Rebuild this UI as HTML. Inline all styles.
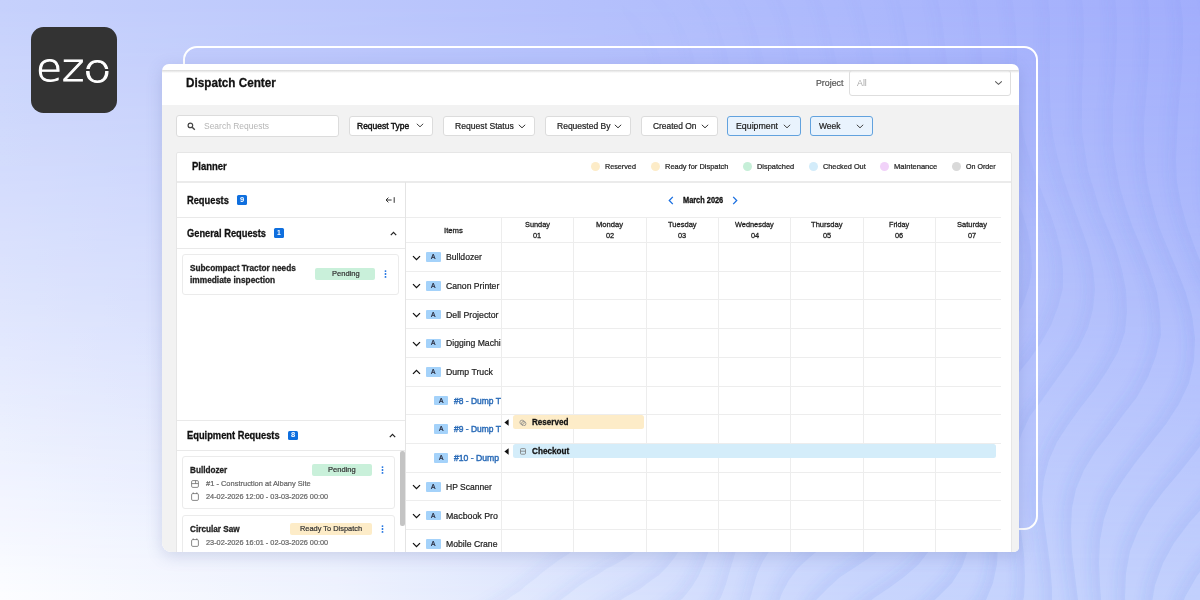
<!DOCTYPE html>
<html lang="en"><head><meta charset="utf-8"><title>Dispatch Center</title>
<style>
html,body{margin:0;padding:0;}
body{width:1200px;height:600px;overflow:hidden;position:relative;font-family:"Liberation Sans",sans-serif;background:#c9d3fc;}
#bg{position:absolute;left:0;top:0;width:1200px;height:600px;background:linear-gradient(to right,#c6d1fc 0%,#b4c0fc 50%,#a2aefc 100%);}
#bg2{position:absolute;left:0;top:0;width:1200px;height:600px;background:linear-gradient(to right,#fcfdff 0%,#eff3fe 28%,#d9e2fd 52%,#c8d5fd 72%,#c2d0fd 100%);
  -webkit-mask-image:linear-gradient(to bottom,rgba(0,0,0,0) 0%,rgba(0,0,0,.45) 50%,rgba(0,0,0,1) 100%);mask-image:linear-gradient(to bottom,rgba(0,0,0,0) 0%,rgba(0,0,0,.45) 50%,rgba(0,0,0,1) 100%);}
#bg svg{position:absolute;left:0;top:0;}
.abs,.t,#cv div,#cv svg{position:absolute;}
.t{white-space:nowrap;line-height:14px;height:14px;transform-origin:0 50%;display:block;}
#logo{position:absolute;left:31px;top:27px;width:86px;height:86px;border-radius:12.5px;background:#333;}
#frame{position:absolute;left:183px;top:46px;width:851px;height:479.5px;border:2px solid #fff;border-radius:14px;background:rgba(140,150,250,.07);}
#shadow{position:absolute;left:162px;top:64px;width:857px;height:487.5px;border-radius:7px 7px 5px 9px;box-shadow:0 4px 16px rgba(80,95,160,.22);}
#card{position:absolute;left:162px;top:64px;width:857px;height:487.5px;overflow:hidden;border-radius:7px 7px 5px 9px;background:#fff;}
#cv{position:absolute;left:-162px;top:-64px;width:1200px;height:600px;}
.btn{background:#fff;border:1px solid #dcdcdc;border-radius:3px;box-sizing:border-box;}
.btn.sel{background:#e9f3fd;border-color:#62a2de;}
.hl{height:1px;background:#e9e9e9;}
.vl{width:1px;background:#e9e9e9;}
.dot{width:9px;height:9px;border-radius:50%;}
.badge{background:#0f6fde;border-radius:1.5px;}
.ab{background:#a4d2fa;border-radius:1px;width:14.5px;height:9.5px;}
.rq{background:#fff;border:1px solid #ebebeb;border-radius:3px;box-sizing:border-box;}
.pill{border-radius:2px;}
#lg{position:absolute;left:0;top:0;font:200 40px/40px "DejaVu Sans","Liberation Sans",sans-serif;color:#fff;-webkit-text-stroke:1px #fff;}
#lg span{position:absolute;display:block;transform-origin:0 0;white-space:nowrap;}

</style></head>
<body>
<div id="bg"><div id="bg2"></div>
<svg width="1200" height="600" viewBox="0 0 1200 600" fill="none">
<defs><filter id="wb" x="-20%" y="-20%" width="140%" height="140%"><feGaussianBlur stdDeviation="6"/></filter>
<linearGradient id="wm" gradientUnits="userSpaceOnUse" x1="600" y1="0" x2="1000" y2="560"><stop offset="0" stop-color="#fff" stop-opacity="0"/><stop offset=".5" stop-color="#fff" stop-opacity=".45"/><stop offset="1" stop-color="#fff" stop-opacity="1"/></linearGradient>
<mask id="wmask" maskUnits="userSpaceOnUse" x="0" y="0" width="1200" height="600"><rect width="1200" height="600" fill="url(#wm)"/></mask>
<clipPath id="wc0"><path d="M330 260 L526 -82 535 -76 542 -69 550 -62 556 -54 563 -46 570 -39 577 -32 584 -25 591 -18 599 -12 608 -7 616 -1 624 6 632 12 639 19 645 27 651 36 655 45 659 55 662 65 664 75 666 85 669 95 671 104 675 113 679 122 683 131 688 140 693 148 699 157 704 166 708 175 712 185 714 194 716 204 716 215 715 225 713 235 710 245 708 255 705 265 703 274 703 284 704 294 707 304 710 314 714 325 717 336 720 347 720 358 719 368 715 378 709 387 702 395 693 403 684 410 676 417 668 424 662 432 657 440 653 450 651 459 648 470 646 480 643 490 639 500 634 509 627 516 619 523 611 529 602 534 593 539 584 544 575 549 567 555 559 560 551 566 543 572 536 578 528 584 520 591 512 596 504 602 495 607 487 612 478 617 468 620 459 624 449 627 440 629 430 632 420 634 411 636 401 638 391 641 381 643 372 645 362 647 352 648 342 650 332 651 321 651 311 651 301 650 291 648 281 646 271 644 262 641 252 638 243 635Z"/></clipPath>
<clipPath id="wc1"><path d="M330 260 L544 -113 553 -106 562 -99 570 -91 577 -83 584 -74 591 -65 598 -57 605 -49 613 -41 621 -34 629 -27 638 -21 647 -14 655 -7 664 0 671 9 677 17 683 27 687 37 691 48 694 58 696 69 699 80 701 91 704 101 708 111 712 120 717 130 723 139 729 148 735 158 740 168 745 178 748 189 751 199 752 210 752 221 750 232 747 243 744 254 741 265 738 276 736 286 736 297 737 307 740 319 743 330 747 342 750 354 752 366 752 377 749 388 744 399 737 408 728 417 718 425 708 432 699 439 691 447 684 455 679 464 675 474 672 485 669 496 666 507 663 518 658 528 651 537 644 545 635 552 626 558 616 564 606 569 597 575 588 580 579 586 570 593 562 599 553 606 545 612 537 619 528 626 519 632 510 638 501 643 491 648 481 653 471 657 460 660 450 663 439 666 429 668 418 670 407 672 397 674 386 676 375 678 364 680 354 681 343 682 332 683 321 684 310 683 299 682 288 681 277 679 266 676 256 673 246 669 235 666Z"/></clipPath>
<clipPath id="wc2"><path d="M330 260 L561 -142 571 -136 580 -128 589 -120 597 -111 605 -101 612 -91 619 -82 626 -72 634 -64 642 -55 651 -48 660 -40 669 -33 678 -26 687 -18 696 -10 703 -1 710 9 716 19 720 30 724 42 727 53 729 65 732 77 735 88 738 99 742 109 747 120 753 130 759 140 765 150 772 161 777 172 782 183 786 194 788 206 789 218 788 230 785 242 782 254 777 265 773 277 770 288 768 300 768 311 769 323 772 335 776 347 779 360 782 373 783 386 781 398 777 410 771 420 762 430 752 439 741 447 730 455 720 462 711 471 704 480 699 490 695 500 692 512 689 524 685 536 681 547 675 557 667 567 659 575 649 582 640 589 629 595 619 601 609 607 600 613 590 620 581 627 572 634 562 641 553 648 544 655 534 662 525 668 514 675 504 680 493 685 482 690 471 694 460 697 448 700 437 702 425 704 414 705 402 707 390 709 379 710 367 712 355 713 344 714 332 715 320 716 308 715 296 715 285 713 273 711 262 708 250 705 239 701 228 697Z"/></clipPath>
<clipPath id="wc3"><path d="M330 260 L577 -170 588 -164 599 -157 608 -148 617 -139 625 -128 633 -118 640 -107 648 -97 655 -87 663 -77 672 -68 681 -60 691 -52 701 -44 711 -36 720 -28 729 -19 737 -9 744 2 750 13 754 25 758 37 761 50 764 62 766 74 770 86 773 98 778 109 784 120 790 131 796 142 803 154 810 165 815 177 820 189 824 202 825 215 825 228 823 240 820 253 815 266 810 278 805 290 801 302 799 315 798 327 800 340 803 353 806 366 810 380 812 394 811 407 809 420 803 432 796 443 786 453 774 462 762 470 751 478 740 487 731 495 724 505 719 516 715 528 711 540 708 553 703 566 698 577 691 588 683 598 673 606 663 614 653 621 642 628 631 634 621 641 610 648 600 655 590 662 580 670 570 677 560 685 550 692 539 699 528 706 517 712 506 718 494 723 482 727 470 730 457 733 445 735 432 737 420 739 407 740 395 741 382 743 370 744 357 745 345 746 332 747 319 747 307 747 294 746 282 745 269 742 257 740 245 736 233 732 221 728Z"/></clipPath>
<clipPath id="wc4"><path d="M330 260 L592 -197 605 -191 616 -184 627 -176 637 -166 646 -155 654 -144 662 -132 670 -121 677 -110 685 -99 694 -89 703 -80 713 -71 723 -63 734 -54 744 -46 755 -36 764 -27 772 -16 779 -4 785 8 790 21 793 34 796 47 799 60 802 73 806 86 810 99 815 111 821 123 827 135 834 147 841 159 848 172 854 184 858 198 861 211 862 225 861 239 858 253 853 266 846 280 840 293 834 306 830 318 828 331 828 344 830 358 832 372 836 387 838 401 840 416 839 430 835 444 828 456 819 467 808 477 795 486 782 495 770 503 760 512 751 522 744 532 738 544 734 557 730 570 726 584 721 597 714 609 706 620 697 630 687 639 676 647 665 655 654 662 642 669 631 677 620 684 609 691 598 699 587 707 576 714 565 722 554 730 542 737 530 743 518 749 505 755 493 759 480 763 466 766 453 769 439 770 426 772 412 773 399 773 386 774 372 775 359 776 345 777 332 777 319 778 305 777 292 777 278 776 265 774 252 771 239 768 226 764 213 760Z"/></clipPath>
<clipPath id="wc5"><path d="M330 260 L607 -223 621 -217 633 -211 645 -202 656 -193 666 -182 675 -170 684 -158 692 -146 700 -134 708 -122 716 -111 725 -100 735 -91 746 -82 757 -73 769 -64 780 -54 791 -44 800 -33 809 -22 816 -9 822 4 827 18 830 32 833 46 836 60 839 74 843 87 847 101 853 114 859 127 866 140 873 153 880 166 886 180 892 194 896 208 898 223 898 238 895 252 890 267 884 281 876 295 869 309 863 322 858 335 856 349 856 363 858 378 861 393 864 408 866 424 866 440 864 454 859 468 851 481 841 492 828 502 815 512 802 521 790 530 779 539 770 550 763 561 757 574 753 588 749 603 744 617 738 630 730 643 721 655 711 665 700 674 689 683 677 691 664 698 652 706 640 713 628 721 616 729 604 736 592 744 580 752 568 760 556 767 543 774 530 781 517 786 503 791 489 795 475 799 461 801 446 803 432 804 418 805 403 805 389 806 375 806 361 807 346 807 332 807 318 808 304 808 290 807 275 806 261 805 247 803 233 800 220 796 206 792Z"/></clipPath>
<clipPath id="wc6"><path d="M330 260 L621 -248 636 -243 650 -236 663 -228 675 -219 686 -209 697 -197 706 -184 715 -171 723 -158 731 -146 740 -133 749 -122 759 -111 770 -101 781 -91 793 -82 805 -72 817 -62 828 -51 838 -39 847 -26 854 -13 860 1 864 16 868 31 871 46 874 61 877 76 880 91 885 105 890 119 896 133 903 147 910 161 917 175 924 190 929 205 932 221 933 236 931 252 927 267 921 283 913 297 904 312 896 326 889 340 885 354 882 368 883 383 885 399 888 415 891 432 892 448 892 465 889 480 883 494 874 507 862 519 849 529 835 539 821 548 809 558 798 568 789 580 782 593 777 607 772 622 767 637 761 652 754 666 745 678 735 690 724 701 712 710 699 719 687 727 674 735 660 743 647 751 634 758 621 766 608 774 595 782 582 789 569 797 555 804 542 811 527 817 513 822 498 827 484 830 468 833 453 835 438 836 423 837 407 837 392 837 377 837 362 837 347 837 332 838 317 838 302 838 287 838 272 837 257 836 242 834 228 832 213 828 198 824Z"/></clipPath>
<clipPath id="wc7"><path d="M330 260 L635 -272 651 -267 666 -261 680 -254 694 -245 706 -235 718 -223 728 -211 738 -197 747 -184 755 -170 764 -157 773 -144 783 -132 794 -121 806 -110 818 -100 831 -90 844 -79 856 -68 868 -56 878 -43 886 -30 894 -15 899 0 903 16 906 32 909 48 911 64 914 80 917 96 922 111 927 126 933 141 940 156 947 171 954 187 960 202 964 218 967 235 966 251 964 268 958 284 950 300 940 315 930 330 922 344 915 359 910 374 908 389 909 405 911 422 914 439 917 457 919 474 917 491 913 507 906 522 896 535 883 547 869 558 854 568 840 577 828 588 817 599 808 612 801 626 796 641 790 657 784 673 777 688 768 702 759 715 748 727 735 738 722 747 709 756 695 765 681 773 667 781 652 788 638 796 624 803 610 811 596 819 582 826 567 833 553 840 538 846 523 852 507 857 492 861 476 864 460 866 444 867 428 868 412 868 396 868 380 868 364 868 348 868 332 868 317 868 301 868 285 868 269 868 253 867 237 866 222 864 206 861 191 857Z"/></clipPath>
<clipPath id="wc8"><path d="M330 260 L649 -296 665 -291 681 -285 697 -278 712 -270 726 -261 739 -250 751 -238 762 -224 771 -210 781 -196 790 -181 799 -168 809 -154 820 -142 831 -130 844 -119 857 -108 870 -97 884 -85 896 -73 908 -60 918 -46 927 -31 933 -15 938 1 942 18 944 36 946 53 948 70 950 86 954 103 958 119 963 135 969 151 976 167 982 183 989 200 994 216 998 234 1000 251 998 268 994 285 986 302 977 318 966 334 956 349 946 364 939 379 935 395 934 411 935 428 938 446 941 465 944 483 945 502 943 520 938 536 929 551 918 565 904 577 889 588 874 598 860 609 847 620 836 632 827 646 820 661 814 677 807 694 800 710 792 725 782 740 771 753 758 765 745 775 731 785 716 794 701 802 686 810 670 818 655 825 640 832 625 840 610 847 594 855 579 862 564 869 548 875 532 881 516 886 500 891 483 894 467 897 450 899 433 900 416 900 399 900 382 900 366 899 349 899 333 899 316 899 299 899 283 900 266 900 249 899 233 898 216 897 199 894 183 891Z"/></clipPath>
<clipPath id="wc9"><path d="M330 260 L663 -321 680 -315 697 -309 714 -303 730 -295 746 -287 760 -276 774 -265 786 -251 797 -237 807 -222 817 -207 826 -192 836 -178 846 -164 858 -151 870 -138 883 -126 897 -114 911 -102 925 -90 937 -77 949 -62 959 -47 967 -31 972 -13 977 4 979 23 981 41 982 59 984 77 986 95 988 112 992 129 997 146 1003 163 1010 180 1016 197 1023 215 1028 232 1031 250 1032 269 1029 287 1023 304 1014 322 1003 338 991 354 980 370 971 386 964 402 961 418 960 435 962 454 965 473 968 492 971 512 971 532 968 550 962 567 952 583 939 596 925 609 909 620 893 631 879 642 866 654 855 667 846 682 838 698 830 715 823 732 814 748 804 764 793 778 780 791 766 802 752 813 736 822 721 831 704 839 688 847 672 854 656 861 639 868 623 875 607 883 591 890 574 897 558 903 542 910 525 915 508 920 491 924 473 927 456 930 438 931 420 932 403 932 385 932 368 932 350 931 333 931 315 931 298 931 280 932 263 932 245 932 228 931 210 930 192 928 175 925Z"/></clipPath>
<clipPath id="wc10"><path d="M330 260 L677 -346 695 -339 713 -334 731 -327 748 -320 765 -312 782 -303 797 -292 810 -279 823 -265 834 -249 844 -234 854 -218 864 -202 874 -187 885 -172 897 -158 910 -145 924 -132 938 -119 952 -106 966 -92 978 -78 989 -62 999 -45 1006 -27 1011 -9 1014 10 1016 29 1017 49 1017 68 1018 87 1019 105 1022 123 1025 141 1030 159 1036 177 1043 195 1050 213 1056 231 1061 250 1063 269 1063 288 1058 307 1051 325 1041 343 1029 360 1016 376 1005 392 996 409 990 425 987 443 987 461 990 481 993 501 996 522 998 543 997 564 993 583 986 600 974 616 960 630 944 642 928 654 912 665 897 677 884 690 872 704 863 720 854 736 845 753 836 770 826 787 814 802 801 816 787 828 772 840 756 850 740 859 723 867 706 875 688 883 671 890 654 896 636 903 619 910 602 917 585 924 568 931 551 938 533 944 516 949 498 954 480 958 461 961 443 963 425 964 406 965 388 965 369 965 351 964 333 964 315 964 296 964 278 965 260 965 241 965 222 965 204 964 185 962 167 960Z"/></clipPath>
<clipPath id="wc11"><path d="M330 260 L692 -372 710 -365 729 -358 748 -352 766 -346 785 -338 803 -329 819 -318 835 -306 849 -292 861 -277 872 -261 883 -244 893 -227 903 -210 914 -194 925 -179 937 -164 950 -150 964 -136 979 -122 993 -107 1006 -92 1019 -76 1029 -59 1037 -41 1044 -22 1048 -2 1050 18 1050 38 1050 58 1050 79 1050 98 1051 118 1053 136 1057 155 1062 174 1068 192 1075 211 1082 230 1089 250 1093 269 1095 289 1093 309 1088 328 1079 347 1067 365 1054 383 1042 400 1030 416 1022 433 1016 451 1014 470 1015 489 1018 510 1021 532 1024 554 1025 576 1024 597 1018 617 1009 635 996 651 980 664 963 677 946 689 929 700 913 713 900 726 888 741 878 758 868 775 858 792 847 809 835 825 822 840 807 853 792 865 775 876 758 886 741 895 723 903 704 911 686 918 668 924 650 931 631 938 614 945 596 952 578 959 560 965 542 972 523 978 505 984 486 989 467 992 448 995 429 997 410 999 391 999 371 999 352 999 333 999 314 998 295 998 275 998 256 999 237 999 217 999 198 998 178 997 159 994Z"/></clipPath>
<clipPath id="wc12"><path d="M330 260 L708 -400 726 -391 745 -384 765 -378 785 -371 804 -364 824 -355 842 -345 859 -333 874 -320 888 -305 901 -288 912 -271 922 -253 932 -234 943 -217 953 -200 965 -183 977 -167 991 -152 1005 -137 1019 -122 1033 -106 1046 -90 1058 -72 1067 -54 1075 -34 1080 -14 1083 7 1084 28 1084 49 1083 70 1082 91 1082 112 1082 132 1085 151 1088 171 1094 190 1100 210 1108 229 1116 249 1122 270 1126 290 1127 311 1125 332 1118 352 1107 371 1095 389 1081 407 1068 425 1057 442 1049 460 1044 479 1042 499 1044 520 1047 542 1050 565 1052 588 1052 611 1049 633 1041 653 1030 671 1016 686 998 700 980 713 961 724 944 736 928 749 914 764 901 779 890 796 878 813 867 830 854 847 841 862 826 877 811 890 794 902 776 912 758 922 739 930 720 938 701 946 682 952 663 959 644 966 625 973 606 980 588 987 569 994 550 1001 531 1008 512 1014 493 1020 473 1024 454 1028 434 1031 414 1033 393 1034 373 1035 353 1034 333 1034 313 1034 293 1033 273 1033 253 1033 232 1033 212 1033 192 1032 171 1031 151 1028Z"/></clipPath>
<clipPath id="wc13"><path d="M330 260 L725 -429 744 -419 763 -411 783 -404 803 -396 824 -389 844 -381 864 -371 883 -360 900 -347 915 -332 929 -315 941 -297 952 -278 962 -259 972 -240 982 -221 992 -202 1004 -185 1016 -168 1030 -152 1044 -136 1058 -119 1072 -102 1084 -84 1095 -66 1104 -46 1111 -25 1115 -4 1117 18 1117 40 1116 62 1115 84 1113 105 1113 126 1113 147 1116 167 1120 188 1126 208 1133 228 1142 249 1150 270 1157 292 1160 313 1161 335 1156 356 1148 377 1137 397 1123 415 1109 434 1095 452 1084 470 1076 489 1072 508 1071 530 1072 552 1075 576 1078 600 1079 624 1077 648 1072 670 1063 690 1049 707 1033 723 1014 736 994 749 975 760 957 773 940 786 925 801 912 817 899 834 886 851 873 868 859 884 844 899 828 913 811 926 794 938 775 948 756 957 736 966 716 973 696 981 676 988 657 994 637 1001 617 1008 598 1015 578 1023 559 1030 539 1038 520 1045 500 1051 479 1057 459 1062 438 1066 417 1068 396 1070 375 1071 354 1071 333 1071 312 1070 291 1069 270 1069 249 1068 228 1067 207 1067 186 1066 164 1064 143 1062Z"/></clipPath>
<clipPath id="wc14"><path d="M330 260 L743 -460 761 -449 781 -439 801 -430 822 -422 843 -414 864 -406 885 -396 905 -385 924 -373 941 -358 956 -341 970 -323 981 -303 992 -283 1001 -262 1011 -242 1020 -222 1031 -203 1042 -184 1055 -166 1068 -149 1082 -132 1096 -114 1110 -96 1122 -77 1132 -57 1140 -36 1146 -14 1149 8 1150 31 1149 54 1148 76 1146 99 1144 121 1144 143 1145 164 1148 185 1153 206 1159 227 1168 249 1177 270 1186 293 1192 315 1195 338 1194 361 1189 383 1179 404 1166 424 1151 443 1136 462 1123 480 1111 499 1104 519 1100 540 1099 563 1100 586 1102 611 1104 636 1104 661 1100 685 1093 707 1081 727 1065 744 1047 759 1027 772 1006 784 986 797 967 809 950 823 934 838 920 855 906 871 892 888 877 905 862 921 846 936 829 950 810 962 792 974 772 984 752 993 732 1002 711 1009 690 1017 670 1024 649 1031 629 1038 609 1045 588 1053 568 1061 548 1069 527 1076 507 1084 486 1090 464 1096 443 1101 421 1104 399 1107 377 1108 355 1108 333 1108 311 1107 290 1106 268 1104 246 1103 224 1102 202 1100 180 1099 158 1097 135 1094Z"/></clipPath>
<clipPath id="wc15"><path d="M330 260 L762 -493 780 -480 799 -468 820 -458 840 -448 862 -439 884 -430 906 -421 927 -410 947 -397 966 -383 982 -366 997 -348 1010 -328 1021 -307 1030 -285 1039 -263 1048 -241 1058 -220 1068 -200 1079 -181 1092 -162 1105 -144 1119 -125 1133 -107 1147 -87 1158 -67 1168 -46 1176 -24 1180 -2 1183 21 1183 45 1182 69 1180 92 1178 115 1177 138 1176 160 1177 182 1181 204 1187 226 1195 248 1204 271 1214 294 1223 317 1229 341 1231 365 1229 388 1221 411 1210 433 1195 453 1179 473 1163 492 1149 511 1138 531 1130 551 1126 573 1125 597 1126 622 1127 648 1128 674 1125 699 1120 723 1110 745 1096 764 1078 781 1058 795 1036 808 1014 820 994 832 974 846 957 860 940 875 925 892 910 909 895 926 879 942 863 958 845 973 827 987 808 999 788 1011 768 1021 747 1030 726 1039 705 1047 683 1054 662 1062 641 1069 620 1077 599 1084 577 1092 556 1101 535 1109 514 1117 492 1124 470 1130 448 1136 425 1140 402 1143 379 1145 356 1146 334 1145 311 1144 288 1142 265 1140 242 1138 219 1136 197 1134 174 1131 151 1128 128 1125Z"/></clipPath>
<clipPath id="wc16"><path d="M330 260 L781 -526 800 -512 819 -498 839 -486 859 -475 881 -464 903 -454 925 -444 948 -433 969 -420 989 -406 1007 -390 1023 -372 1037 -351 1049 -330 1059 -307 1068 -284 1076 -261 1085 -238 1094 -217 1104 -196 1116 -175 1129 -156 1142 -137 1157 -117 1170 -98 1184 -77 1195 -56 1204 -34 1211 -11 1216 12 1218 36 1218 61 1216 85 1214 109 1212 133 1210 156 1210 179 1211 202 1216 225 1223 248 1232 271 1242 295 1253 319 1261 344 1266 369 1267 394 1263 418 1253 441 1240 463 1223 484 1206 504 1189 523 1174 543 1163 563 1155 585 1151 608 1149 632 1149 658 1149 685 1148 712 1144 737 1136 761 1124 783 1107 801 1088 817 1066 831 1043 844 1021 856 999 868 980 882 962 897 945 913 928 929 912 947 896 964 879 980 862 996 844 1011 825 1025 805 1038 784 1049 763 1060 741 1069 720 1078 697 1086 675 1094 653 1102 631 1109 609 1117 587 1125 565 1134 543 1142 521 1150 498 1158 476 1165 452 1171 429 1176 405 1180 381 1182 358 1183 334 1182 310 1181 286 1179 262 1176 239 1173 215 1170 192 1166 168 1163 145 1159 121 1155Z"/></clipPath>
<clipPath id="wc17"><path d="M330 260 L801 -561 820 -545 839 -529 858 -515 879 -501 900 -489 922 -477 944 -466 967 -454 989 -442 1010 -428 1030 -412 1047 -394 1062 -374 1076 -352 1087 -329 1096 -305 1104 -281 1112 -257 1121 -233 1130 -211 1140 -189 1152 -168 1165 -148 1180 -128 1194 -108 1208 -87 1221 -66 1233 -44 1242 -21 1249 3 1253 28 1254 52 1254 78 1252 103 1249 127 1246 152 1245 176 1245 200 1247 224 1252 247 1260 271 1270 296 1281 321 1291 347 1299 373 1303 399 1302 425 1295 449 1283 473 1268 495 1249 516 1230 536 1213 556 1197 576 1185 597 1177 619 1172 643 1170 669 1170 696 1168 723 1165 750 1159 776 1149 799 1134 820 1116 838 1094 853 1071 867 1048 879 1025 892 1004 905 984 919 965 934 948 951 931 968 914 985 897 1003 879 1019 860 1036 841 1051 821 1065 801 1078 779 1090 757 1100 735 1110 712 1119 689 1128 666 1136 643 1143 620 1151 597 1159 574 1168 551 1176 528 1184 505 1192 481 1199 457 1206 433 1211 408 1215 384 1218 359 1219 334 1219 309 1217 284 1214 260 1211 235 1207 211 1203 187 1198 163 1194 138 1189 114 1184Z"/></clipPath>
<clipPath id="wc18"><path d="M330 260 L821 -596 840 -578 859 -560 878 -544 898 -528 918 -514 940 -500 962 -487 985 -475 1008 -462 1030 -448 1051 -432 1070 -414 1087 -395 1101 -373 1113 -350 1124 -325 1133 -300 1140 -275 1148 -250 1157 -226 1166 -203 1177 -181 1189 -160 1203 -139 1218 -118 1233 -97 1248 -75 1261 -53 1272 -30 1281 -6 1288 19 1291 44 1292 70 1291 96 1289 122 1286 147 1283 173 1281 198 1281 222 1284 247 1289 272 1298 297 1309 323 1320 349 1330 376 1336 404 1338 431 1334 457 1325 482 1311 506 1293 528 1273 549 1252 569 1233 589 1217 609 1205 631 1196 654 1191 679 1189 706 1187 733 1184 761 1179 788 1171 814 1159 837 1142 857 1122 874 1099 889 1075 903 1051 915 1028 929 1007 942 987 957 968 974 950 991 932 1008 914 1026 896 1044 878 1061 858 1077 838 1093 817 1107 796 1120 773 1132 751 1143 727 1153 704 1162 680 1170 656 1179 632 1186 608 1194 584 1202 560 1210 535 1218 511 1226 486 1233 462 1240 436 1246 411 1250 385 1253 360 1254 334 1254 308 1252 283 1249 257 1245 232 1240 207 1235 182 1229 157 1224 132 1218 108 1213Z"/></clipPath>
<clipPath id="wc19"><path d="M330 260 L840 -630 860 -611 879 -591 898 -573 917 -555 937 -538 958 -523 980 -508 1003 -494 1025 -481 1048 -466 1070 -451 1091 -433 1109 -414 1126 -393 1140 -370 1151 -346 1161 -320 1169 -294 1177 -268 1185 -243 1193 -218 1203 -195 1215 -172 1228 -150 1243 -128 1258 -107 1274 -85 1289 -63 1302 -39 1314 -15 1323 10 1328 36 1331 62 1332 89 1330 116 1327 143 1323 169 1319 195 1317 221 1317 247 1320 272 1327 298 1336 325 1347 352 1357 380 1366 408 1371 436 1370 464 1364 491 1352 516 1335 540 1314 562 1292 582 1270 602 1251 622 1234 643 1222 665 1213 690 1208 715 1204 743 1202 771 1198 800 1191 827 1181 852 1166 875 1147 894 1126 911 1102 926 1078 940 1054 953 1031 967 1010 982 989 998 970 1015 951 1032 933 1050 914 1069 895 1087 876 1104 856 1121 834 1137 813 1151 790 1165 767 1177 743 1187 718 1197 693 1206 668 1214 643 1222 618 1230 593 1237 568 1245 543 1252 517 1259 492 1266 466 1273 440 1279 414 1283 387 1286 361 1287 334 1287 308 1286 281 1282 255 1278 229 1272 203 1266 177 1260 152 1254 127 1247 101 1241Z"/></clipPath>
</defs><g mask="url(#wmask)">
<g clip-path="url(#wc0)"><path d="M526 -82 535 -76 542 -69 550 -62 556 -54 563 -46 570 -39 577 -32 584 -25 591 -18 599 -12 608 -7 616 -1 624 6 632 12 639 19 645 27 651 36 655 45 659 55 662 65 664 75 666 85 669 95 671 104 675 113 679 122 683 131 688 140 693 148 699 157 704 166 708 175 712 185 714 194 716 204 716 215 715 225 713 235 710 245 708 255 705 265 703 274 703 284 704 294 707 304 710 314 714 325 717 336 720 347 720 358 719 368 715 378 709 387 702 395 693 403 684 410 676 417 668 424 662 432 657 440 653 450 651 459 648 470 646 480 643 490 639 500 634 509 627 516 619 523 611 529 602 534 593 539 584 544 575 549 567 555 559 560 551 566 543 572 536 578 528 584 520 591 512 596 504 602 495 607 487 612 478 617 468 620 459 624 449 627 440 629 430 632 420 634 411 636 401 638 391 641 381 643 372 645 362 647 352 648 342 650 332 651 321 651 311 651 301 650 291 648 281 646 271 644 262 641 252 638 243 635" stroke="#3f66d8" stroke-opacity=".10" stroke-width="16" fill="none" filter="url(#wb)"/></g>
<g clip-path="url(#wc1)"><path d="M544 -113 553 -106 562 -99 570 -91 577 -83 584 -74 591 -65 598 -57 605 -49 613 -41 621 -34 629 -27 638 -21 647 -14 655 -7 664 0 671 9 677 17 683 27 687 37 691 48 694 58 696 69 699 80 701 91 704 101 708 111 712 120 717 130 723 139 729 148 735 158 740 168 745 178 748 189 751 199 752 210 752 221 750 232 747 243 744 254 741 265 738 276 736 286 736 297 737 307 740 319 743 330 747 342 750 354 752 366 752 377 749 388 744 399 737 408 728 417 718 425 708 432 699 439 691 447 684 455 679 464 675 474 672 485 669 496 666 507 663 518 658 528 651 537 644 545 635 552 626 558 616 564 606 569 597 575 588 580 579 586 570 593 562 599 553 606 545 612 537 619 528 626 519 632 510 638 501 643 491 648 481 653 471 657 460 660 450 663 439 666 429 668 418 670 407 672 397 674 386 676 375 678 364 680 354 681 343 682 332 683 321 684 310 683 299 682 288 681 277 679 266 676 256 673 246 669 235 666" stroke="#3f66d8" stroke-opacity=".10" stroke-width="16" fill="none" filter="url(#wb)"/></g>
<g clip-path="url(#wc2)"><path d="M561 -142 571 -136 580 -128 589 -120 597 -111 605 -101 612 -91 619 -82 626 -72 634 -64 642 -55 651 -48 660 -40 669 -33 678 -26 687 -18 696 -10 703 -1 710 9 716 19 720 30 724 42 727 53 729 65 732 77 735 88 738 99 742 109 747 120 753 130 759 140 765 150 772 161 777 172 782 183 786 194 788 206 789 218 788 230 785 242 782 254 777 265 773 277 770 288 768 300 768 311 769 323 772 335 776 347 779 360 782 373 783 386 781 398 777 410 771 420 762 430 752 439 741 447 730 455 720 462 711 471 704 480 699 490 695 500 692 512 689 524 685 536 681 547 675 557 667 567 659 575 649 582 640 589 629 595 619 601 609 607 600 613 590 620 581 627 572 634 562 641 553 648 544 655 534 662 525 668 514 675 504 680 493 685 482 690 471 694 460 697 448 700 437 702 425 704 414 705 402 707 390 709 379 710 367 712 355 713 344 714 332 715 320 716 308 715 296 715 285 713 273 711 262 708 250 705 239 701 228 697" stroke="#3f66d8" stroke-opacity=".10" stroke-width="16" fill="none" filter="url(#wb)"/></g>
<g clip-path="url(#wc3)"><path d="M577 -170 588 -164 599 -157 608 -148 617 -139 625 -128 633 -118 640 -107 648 -97 655 -87 663 -77 672 -68 681 -60 691 -52 701 -44 711 -36 720 -28 729 -19 737 -9 744 2 750 13 754 25 758 37 761 50 764 62 766 74 770 86 773 98 778 109 784 120 790 131 796 142 803 154 810 165 815 177 820 189 824 202 825 215 825 228 823 240 820 253 815 266 810 278 805 290 801 302 799 315 798 327 800 340 803 353 806 366 810 380 812 394 811 407 809 420 803 432 796 443 786 453 774 462 762 470 751 478 740 487 731 495 724 505 719 516 715 528 711 540 708 553 703 566 698 577 691 588 683 598 673 606 663 614 653 621 642 628 631 634 621 641 610 648 600 655 590 662 580 670 570 677 560 685 550 692 539 699 528 706 517 712 506 718 494 723 482 727 470 730 457 733 445 735 432 737 420 739 407 740 395 741 382 743 370 744 357 745 345 746 332 747 319 747 307 747 294 746 282 745 269 742 257 740 245 736 233 732 221 728" stroke="#3f66d8" stroke-opacity=".10" stroke-width="16" fill="none" filter="url(#wb)"/></g>
<g clip-path="url(#wc4)"><path d="M592 -197 605 -191 616 -184 627 -176 637 -166 646 -155 654 -144 662 -132 670 -121 677 -110 685 -99 694 -89 703 -80 713 -71 723 -63 734 -54 744 -46 755 -36 764 -27 772 -16 779 -4 785 8 790 21 793 34 796 47 799 60 802 73 806 86 810 99 815 111 821 123 827 135 834 147 841 159 848 172 854 184 858 198 861 211 862 225 861 239 858 253 853 266 846 280 840 293 834 306 830 318 828 331 828 344 830 358 832 372 836 387 838 401 840 416 839 430 835 444 828 456 819 467 808 477 795 486 782 495 770 503 760 512 751 522 744 532 738 544 734 557 730 570 726 584 721 597 714 609 706 620 697 630 687 639 676 647 665 655 654 662 642 669 631 677 620 684 609 691 598 699 587 707 576 714 565 722 554 730 542 737 530 743 518 749 505 755 493 759 480 763 466 766 453 769 439 770 426 772 412 773 399 773 386 774 372 775 359 776 345 777 332 777 319 778 305 777 292 777 278 776 265 774 252 771 239 768 226 764 213 760" stroke="#3f66d8" stroke-opacity=".10" stroke-width="16" fill="none" filter="url(#wb)"/></g>
<g clip-path="url(#wc5)"><path d="M607 -223 621 -217 633 -211 645 -202 656 -193 666 -182 675 -170 684 -158 692 -146 700 -134 708 -122 716 -111 725 -100 735 -91 746 -82 757 -73 769 -64 780 -54 791 -44 800 -33 809 -22 816 -9 822 4 827 18 830 32 833 46 836 60 839 74 843 87 847 101 853 114 859 127 866 140 873 153 880 166 886 180 892 194 896 208 898 223 898 238 895 252 890 267 884 281 876 295 869 309 863 322 858 335 856 349 856 363 858 378 861 393 864 408 866 424 866 440 864 454 859 468 851 481 841 492 828 502 815 512 802 521 790 530 779 539 770 550 763 561 757 574 753 588 749 603 744 617 738 630 730 643 721 655 711 665 700 674 689 683 677 691 664 698 652 706 640 713 628 721 616 729 604 736 592 744 580 752 568 760 556 767 543 774 530 781 517 786 503 791 489 795 475 799 461 801 446 803 432 804 418 805 403 805 389 806 375 806 361 807 346 807 332 807 318 808 304 808 290 807 275 806 261 805 247 803 233 800 220 796 206 792" stroke="#3f66d8" stroke-opacity=".10" stroke-width="16" fill="none" filter="url(#wb)"/></g>
<g clip-path="url(#wc6)"><path d="M621 -248 636 -243 650 -236 663 -228 675 -219 686 -209 697 -197 706 -184 715 -171 723 -158 731 -146 740 -133 749 -122 759 -111 770 -101 781 -91 793 -82 805 -72 817 -62 828 -51 838 -39 847 -26 854 -13 860 1 864 16 868 31 871 46 874 61 877 76 880 91 885 105 890 119 896 133 903 147 910 161 917 175 924 190 929 205 932 221 933 236 931 252 927 267 921 283 913 297 904 312 896 326 889 340 885 354 882 368 883 383 885 399 888 415 891 432 892 448 892 465 889 480 883 494 874 507 862 519 849 529 835 539 821 548 809 558 798 568 789 580 782 593 777 607 772 622 767 637 761 652 754 666 745 678 735 690 724 701 712 710 699 719 687 727 674 735 660 743 647 751 634 758 621 766 608 774 595 782 582 789 569 797 555 804 542 811 527 817 513 822 498 827 484 830 468 833 453 835 438 836 423 837 407 837 392 837 377 837 362 837 347 837 332 838 317 838 302 838 287 838 272 837 257 836 242 834 228 832 213 828 198 824" stroke="#3f66d8" stroke-opacity=".10" stroke-width="16" fill="none" filter="url(#wb)"/></g>
<g clip-path="url(#wc7)"><path d="M635 -272 651 -267 666 -261 680 -254 694 -245 706 -235 718 -223 728 -211 738 -197 747 -184 755 -170 764 -157 773 -144 783 -132 794 -121 806 -110 818 -100 831 -90 844 -79 856 -68 868 -56 878 -43 886 -30 894 -15 899 0 903 16 906 32 909 48 911 64 914 80 917 96 922 111 927 126 933 141 940 156 947 171 954 187 960 202 964 218 967 235 966 251 964 268 958 284 950 300 940 315 930 330 922 344 915 359 910 374 908 389 909 405 911 422 914 439 917 457 919 474 917 491 913 507 906 522 896 535 883 547 869 558 854 568 840 577 828 588 817 599 808 612 801 626 796 641 790 657 784 673 777 688 768 702 759 715 748 727 735 738 722 747 709 756 695 765 681 773 667 781 652 788 638 796 624 803 610 811 596 819 582 826 567 833 553 840 538 846 523 852 507 857 492 861 476 864 460 866 444 867 428 868 412 868 396 868 380 868 364 868 348 868 332 868 317 868 301 868 285 868 269 868 253 867 237 866 222 864 206 861 191 857" stroke="#3f66d8" stroke-opacity=".10" stroke-width="16" fill="none" filter="url(#wb)"/></g>
<g clip-path="url(#wc8)"><path d="M649 -296 665 -291 681 -285 697 -278 712 -270 726 -261 739 -250 751 -238 762 -224 771 -210 781 -196 790 -181 799 -168 809 -154 820 -142 831 -130 844 -119 857 -108 870 -97 884 -85 896 -73 908 -60 918 -46 927 -31 933 -15 938 1 942 18 944 36 946 53 948 70 950 86 954 103 958 119 963 135 969 151 976 167 982 183 989 200 994 216 998 234 1000 251 998 268 994 285 986 302 977 318 966 334 956 349 946 364 939 379 935 395 934 411 935 428 938 446 941 465 944 483 945 502 943 520 938 536 929 551 918 565 904 577 889 588 874 598 860 609 847 620 836 632 827 646 820 661 814 677 807 694 800 710 792 725 782 740 771 753 758 765 745 775 731 785 716 794 701 802 686 810 670 818 655 825 640 832 625 840 610 847 594 855 579 862 564 869 548 875 532 881 516 886 500 891 483 894 467 897 450 899 433 900 416 900 399 900 382 900 366 899 349 899 333 899 316 899 299 899 283 900 266 900 249 899 233 898 216 897 199 894 183 891" stroke="#3f66d8" stroke-opacity=".10" stroke-width="16" fill="none" filter="url(#wb)"/></g>
<g clip-path="url(#wc9)"><path d="M663 -321 680 -315 697 -309 714 -303 730 -295 746 -287 760 -276 774 -265 786 -251 797 -237 807 -222 817 -207 826 -192 836 -178 846 -164 858 -151 870 -138 883 -126 897 -114 911 -102 925 -90 937 -77 949 -62 959 -47 967 -31 972 -13 977 4 979 23 981 41 982 59 984 77 986 95 988 112 992 129 997 146 1003 163 1010 180 1016 197 1023 215 1028 232 1031 250 1032 269 1029 287 1023 304 1014 322 1003 338 991 354 980 370 971 386 964 402 961 418 960 435 962 454 965 473 968 492 971 512 971 532 968 550 962 567 952 583 939 596 925 609 909 620 893 631 879 642 866 654 855 667 846 682 838 698 830 715 823 732 814 748 804 764 793 778 780 791 766 802 752 813 736 822 721 831 704 839 688 847 672 854 656 861 639 868 623 875 607 883 591 890 574 897 558 903 542 910 525 915 508 920 491 924 473 927 456 930 438 931 420 932 403 932 385 932 368 932 350 931 333 931 315 931 298 931 280 932 263 932 245 932 228 931 210 930 192 928 175 925" stroke="#3f66d8" stroke-opacity=".10" stroke-width="16" fill="none" filter="url(#wb)"/></g>
<g clip-path="url(#wc10)"><path d="M677 -346 695 -339 713 -334 731 -327 748 -320 765 -312 782 -303 797 -292 810 -279 823 -265 834 -249 844 -234 854 -218 864 -202 874 -187 885 -172 897 -158 910 -145 924 -132 938 -119 952 -106 966 -92 978 -78 989 -62 999 -45 1006 -27 1011 -9 1014 10 1016 29 1017 49 1017 68 1018 87 1019 105 1022 123 1025 141 1030 159 1036 177 1043 195 1050 213 1056 231 1061 250 1063 269 1063 288 1058 307 1051 325 1041 343 1029 360 1016 376 1005 392 996 409 990 425 987 443 987 461 990 481 993 501 996 522 998 543 997 564 993 583 986 600 974 616 960 630 944 642 928 654 912 665 897 677 884 690 872 704 863 720 854 736 845 753 836 770 826 787 814 802 801 816 787 828 772 840 756 850 740 859 723 867 706 875 688 883 671 890 654 896 636 903 619 910 602 917 585 924 568 931 551 938 533 944 516 949 498 954 480 958 461 961 443 963 425 964 406 965 388 965 369 965 351 964 333 964 315 964 296 964 278 965 260 965 241 965 222 965 204 964 185 962 167 960" stroke="#3f66d8" stroke-opacity=".10" stroke-width="16" fill="none" filter="url(#wb)"/></g>
<g clip-path="url(#wc11)"><path d="M692 -372 710 -365 729 -358 748 -352 766 -346 785 -338 803 -329 819 -318 835 -306 849 -292 861 -277 872 -261 883 -244 893 -227 903 -210 914 -194 925 -179 937 -164 950 -150 964 -136 979 -122 993 -107 1006 -92 1019 -76 1029 -59 1037 -41 1044 -22 1048 -2 1050 18 1050 38 1050 58 1050 79 1050 98 1051 118 1053 136 1057 155 1062 174 1068 192 1075 211 1082 230 1089 250 1093 269 1095 289 1093 309 1088 328 1079 347 1067 365 1054 383 1042 400 1030 416 1022 433 1016 451 1014 470 1015 489 1018 510 1021 532 1024 554 1025 576 1024 597 1018 617 1009 635 996 651 980 664 963 677 946 689 929 700 913 713 900 726 888 741 878 758 868 775 858 792 847 809 835 825 822 840 807 853 792 865 775 876 758 886 741 895 723 903 704 911 686 918 668 924 650 931 631 938 614 945 596 952 578 959 560 965 542 972 523 978 505 984 486 989 467 992 448 995 429 997 410 999 391 999 371 999 352 999 333 999 314 998 295 998 275 998 256 999 237 999 217 999 198 998 178 997 159 994" stroke="#3f66d8" stroke-opacity=".10" stroke-width="16" fill="none" filter="url(#wb)"/></g>
<g clip-path="url(#wc12)"><path d="M708 -400 726 -391 745 -384 765 -378 785 -371 804 -364 824 -355 842 -345 859 -333 874 -320 888 -305 901 -288 912 -271 922 -253 932 -234 943 -217 953 -200 965 -183 977 -167 991 -152 1005 -137 1019 -122 1033 -106 1046 -90 1058 -72 1067 -54 1075 -34 1080 -14 1083 7 1084 28 1084 49 1083 70 1082 91 1082 112 1082 132 1085 151 1088 171 1094 190 1100 210 1108 229 1116 249 1122 270 1126 290 1127 311 1125 332 1118 352 1107 371 1095 389 1081 407 1068 425 1057 442 1049 460 1044 479 1042 499 1044 520 1047 542 1050 565 1052 588 1052 611 1049 633 1041 653 1030 671 1016 686 998 700 980 713 961 724 944 736 928 749 914 764 901 779 890 796 878 813 867 830 854 847 841 862 826 877 811 890 794 902 776 912 758 922 739 930 720 938 701 946 682 952 663 959 644 966 625 973 606 980 588 987 569 994 550 1001 531 1008 512 1014 493 1020 473 1024 454 1028 434 1031 414 1033 393 1034 373 1035 353 1034 333 1034 313 1034 293 1033 273 1033 253 1033 232 1033 212 1033 192 1032 171 1031 151 1028" stroke="#3f66d8" stroke-opacity=".10" stroke-width="16" fill="none" filter="url(#wb)"/></g>
<g clip-path="url(#wc13)"><path d="M725 -429 744 -419 763 -411 783 -404 803 -396 824 -389 844 -381 864 -371 883 -360 900 -347 915 -332 929 -315 941 -297 952 -278 962 -259 972 -240 982 -221 992 -202 1004 -185 1016 -168 1030 -152 1044 -136 1058 -119 1072 -102 1084 -84 1095 -66 1104 -46 1111 -25 1115 -4 1117 18 1117 40 1116 62 1115 84 1113 105 1113 126 1113 147 1116 167 1120 188 1126 208 1133 228 1142 249 1150 270 1157 292 1160 313 1161 335 1156 356 1148 377 1137 397 1123 415 1109 434 1095 452 1084 470 1076 489 1072 508 1071 530 1072 552 1075 576 1078 600 1079 624 1077 648 1072 670 1063 690 1049 707 1033 723 1014 736 994 749 975 760 957 773 940 786 925 801 912 817 899 834 886 851 873 868 859 884 844 899 828 913 811 926 794 938 775 948 756 957 736 966 716 973 696 981 676 988 657 994 637 1001 617 1008 598 1015 578 1023 559 1030 539 1038 520 1045 500 1051 479 1057 459 1062 438 1066 417 1068 396 1070 375 1071 354 1071 333 1071 312 1070 291 1069 270 1069 249 1068 228 1067 207 1067 186 1066 164 1064 143 1062" stroke="#3f66d8" stroke-opacity=".10" stroke-width="16" fill="none" filter="url(#wb)"/></g>
<g clip-path="url(#wc14)"><path d="M743 -460 761 -449 781 -439 801 -430 822 -422 843 -414 864 -406 885 -396 905 -385 924 -373 941 -358 956 -341 970 -323 981 -303 992 -283 1001 -262 1011 -242 1020 -222 1031 -203 1042 -184 1055 -166 1068 -149 1082 -132 1096 -114 1110 -96 1122 -77 1132 -57 1140 -36 1146 -14 1149 8 1150 31 1149 54 1148 76 1146 99 1144 121 1144 143 1145 164 1148 185 1153 206 1159 227 1168 249 1177 270 1186 293 1192 315 1195 338 1194 361 1189 383 1179 404 1166 424 1151 443 1136 462 1123 480 1111 499 1104 519 1100 540 1099 563 1100 586 1102 611 1104 636 1104 661 1100 685 1093 707 1081 727 1065 744 1047 759 1027 772 1006 784 986 797 967 809 950 823 934 838 920 855 906 871 892 888 877 905 862 921 846 936 829 950 810 962 792 974 772 984 752 993 732 1002 711 1009 690 1017 670 1024 649 1031 629 1038 609 1045 588 1053 568 1061 548 1069 527 1076 507 1084 486 1090 464 1096 443 1101 421 1104 399 1107 377 1108 355 1108 333 1108 311 1107 290 1106 268 1104 246 1103 224 1102 202 1100 180 1099 158 1097 135 1094" stroke="#3f66d8" stroke-opacity=".10" stroke-width="16" fill="none" filter="url(#wb)"/></g>
<g clip-path="url(#wc15)"><path d="M762 -493 780 -480 799 -468 820 -458 840 -448 862 -439 884 -430 906 -421 927 -410 947 -397 966 -383 982 -366 997 -348 1010 -328 1021 -307 1030 -285 1039 -263 1048 -241 1058 -220 1068 -200 1079 -181 1092 -162 1105 -144 1119 -125 1133 -107 1147 -87 1158 -67 1168 -46 1176 -24 1180 -2 1183 21 1183 45 1182 69 1180 92 1178 115 1177 138 1176 160 1177 182 1181 204 1187 226 1195 248 1204 271 1214 294 1223 317 1229 341 1231 365 1229 388 1221 411 1210 433 1195 453 1179 473 1163 492 1149 511 1138 531 1130 551 1126 573 1125 597 1126 622 1127 648 1128 674 1125 699 1120 723 1110 745 1096 764 1078 781 1058 795 1036 808 1014 820 994 832 974 846 957 860 940 875 925 892 910 909 895 926 879 942 863 958 845 973 827 987 808 999 788 1011 768 1021 747 1030 726 1039 705 1047 683 1054 662 1062 641 1069 620 1077 599 1084 577 1092 556 1101 535 1109 514 1117 492 1124 470 1130 448 1136 425 1140 402 1143 379 1145 356 1146 334 1145 311 1144 288 1142 265 1140 242 1138 219 1136 197 1134 174 1131 151 1128 128 1125" stroke="#3f66d8" stroke-opacity=".10" stroke-width="16" fill="none" filter="url(#wb)"/></g>
<g clip-path="url(#wc16)"><path d="M781 -526 800 -512 819 -498 839 -486 859 -475 881 -464 903 -454 925 -444 948 -433 969 -420 989 -406 1007 -390 1023 -372 1037 -351 1049 -330 1059 -307 1068 -284 1076 -261 1085 -238 1094 -217 1104 -196 1116 -175 1129 -156 1142 -137 1157 -117 1170 -98 1184 -77 1195 -56 1204 -34 1211 -11 1216 12 1218 36 1218 61 1216 85 1214 109 1212 133 1210 156 1210 179 1211 202 1216 225 1223 248 1232 271 1242 295 1253 319 1261 344 1266 369 1267 394 1263 418 1253 441 1240 463 1223 484 1206 504 1189 523 1174 543 1163 563 1155 585 1151 608 1149 632 1149 658 1149 685 1148 712 1144 737 1136 761 1124 783 1107 801 1088 817 1066 831 1043 844 1021 856 999 868 980 882 962 897 945 913 928 929 912 947 896 964 879 980 862 996 844 1011 825 1025 805 1038 784 1049 763 1060 741 1069 720 1078 697 1086 675 1094 653 1102 631 1109 609 1117 587 1125 565 1134 543 1142 521 1150 498 1158 476 1165 452 1171 429 1176 405 1180 381 1182 358 1183 334 1182 310 1181 286 1179 262 1176 239 1173 215 1170 192 1166 168 1163 145 1159 121 1155" stroke="#3f66d8" stroke-opacity=".10" stroke-width="16" fill="none" filter="url(#wb)"/></g>
<g clip-path="url(#wc17)"><path d="M801 -561 820 -545 839 -529 858 -515 879 -501 900 -489 922 -477 944 -466 967 -454 989 -442 1010 -428 1030 -412 1047 -394 1062 -374 1076 -352 1087 -329 1096 -305 1104 -281 1112 -257 1121 -233 1130 -211 1140 -189 1152 -168 1165 -148 1180 -128 1194 -108 1208 -87 1221 -66 1233 -44 1242 -21 1249 3 1253 28 1254 52 1254 78 1252 103 1249 127 1246 152 1245 176 1245 200 1247 224 1252 247 1260 271 1270 296 1281 321 1291 347 1299 373 1303 399 1302 425 1295 449 1283 473 1268 495 1249 516 1230 536 1213 556 1197 576 1185 597 1177 619 1172 643 1170 669 1170 696 1168 723 1165 750 1159 776 1149 799 1134 820 1116 838 1094 853 1071 867 1048 879 1025 892 1004 905 984 919 965 934 948 951 931 968 914 985 897 1003 879 1019 860 1036 841 1051 821 1065 801 1078 779 1090 757 1100 735 1110 712 1119 689 1128 666 1136 643 1143 620 1151 597 1159 574 1168 551 1176 528 1184 505 1192 481 1199 457 1206 433 1211 408 1215 384 1218 359 1219 334 1219 309 1217 284 1214 260 1211 235 1207 211 1203 187 1198 163 1194 138 1189 114 1184" stroke="#3f66d8" stroke-opacity=".10" stroke-width="16" fill="none" filter="url(#wb)"/></g>
<g clip-path="url(#wc18)"><path d="M821 -596 840 -578 859 -560 878 -544 898 -528 918 -514 940 -500 962 -487 985 -475 1008 -462 1030 -448 1051 -432 1070 -414 1087 -395 1101 -373 1113 -350 1124 -325 1133 -300 1140 -275 1148 -250 1157 -226 1166 -203 1177 -181 1189 -160 1203 -139 1218 -118 1233 -97 1248 -75 1261 -53 1272 -30 1281 -6 1288 19 1291 44 1292 70 1291 96 1289 122 1286 147 1283 173 1281 198 1281 222 1284 247 1289 272 1298 297 1309 323 1320 349 1330 376 1336 404 1338 431 1334 457 1325 482 1311 506 1293 528 1273 549 1252 569 1233 589 1217 609 1205 631 1196 654 1191 679 1189 706 1187 733 1184 761 1179 788 1171 814 1159 837 1142 857 1122 874 1099 889 1075 903 1051 915 1028 929 1007 942 987 957 968 974 950 991 932 1008 914 1026 896 1044 878 1061 858 1077 838 1093 817 1107 796 1120 773 1132 751 1143 727 1153 704 1162 680 1170 656 1179 632 1186 608 1194 584 1202 560 1210 535 1218 511 1226 486 1233 462 1240 436 1246 411 1250 385 1253 360 1254 334 1254 308 1252 283 1249 257 1245 232 1240 207 1235 182 1229 157 1224 132 1218 108 1213" stroke="#3f66d8" stroke-opacity=".10" stroke-width="16" fill="none" filter="url(#wb)"/></g>
<g clip-path="url(#wc19)"><path d="M840 -630 860 -611 879 -591 898 -573 917 -555 937 -538 958 -523 980 -508 1003 -494 1025 -481 1048 -466 1070 -451 1091 -433 1109 -414 1126 -393 1140 -370 1151 -346 1161 -320 1169 -294 1177 -268 1185 -243 1193 -218 1203 -195 1215 -172 1228 -150 1243 -128 1258 -107 1274 -85 1289 -63 1302 -39 1314 -15 1323 10 1328 36 1331 62 1332 89 1330 116 1327 143 1323 169 1319 195 1317 221 1317 247 1320 272 1327 298 1336 325 1347 352 1357 380 1366 408 1371 436 1370 464 1364 491 1352 516 1335 540 1314 562 1292 582 1270 602 1251 622 1234 643 1222 665 1213 690 1208 715 1204 743 1202 771 1198 800 1191 827 1181 852 1166 875 1147 894 1126 911 1102 926 1078 940 1054 953 1031 967 1010 982 989 998 970 1015 951 1032 933 1050 914 1069 895 1087 876 1104 856 1121 834 1137 813 1151 790 1165 767 1177 743 1187 718 1197 693 1206 668 1214 643 1222 618 1230 593 1237 568 1245 543 1252 517 1259 492 1266 466 1273 440 1279 414 1283 387 1286 361 1287 334 1287 308 1286 281 1282 255 1278 229 1272 203 1266 177 1260 152 1254 127 1247 101 1241" stroke="#3f66d8" stroke-opacity=".10" stroke-width="16" fill="none" filter="url(#wb)"/></g>
</g>
</svg>
</div>
<div id="logo"></div>
<div id="frame"></div>
<div id="shadow"></div>
<div id="card"><div id="cv">
  <!-- header -->
  <div style="left:162px;top:70px;width:857px;height:3px;background:linear-gradient(#d9d9d9,#fff);"></div>
  <div style="left:162px;top:105px;width:857px;height:460px;background:#f2f2f2;"></div>
  <div class="btn" style="left:849px;top:70px;width:162px;height:25.5px;border-color:#dedede;background:transparent;"></div>
  <svg style="left:994px;top:80px;" width="9" height="6" viewBox="0 0 9 6"><path d="M1.2 1.3 L4.5 4.3 L7.8 1.3" stroke="#5a5a5a" stroke-width="1.1" fill="none"/></svg>
  <!-- filter bar -->
  <div class="btn" style="left:176px;top:115px;width:163px;height:21.5px;"></div>
  <svg style="left:187px;top:122px;" width="9" height="9" viewBox="0 0 9 9"><circle cx="3.4" cy="3.4" r="2.3" stroke="#444" stroke-width="1.2" fill="none"/><path d="M5.2 5.2 L7.8 7.8" stroke="#444" stroke-width="1.4"/></svg>
  <div class="btn" style="left:349px;top:115.5px;width:83.5px;height:20px;"></div>
  <div class="btn" style="left:442.7px;top:115.5px;width:92.8px;height:20px;"></div>
  <div class="btn" style="left:544.5px;top:115.5px;width:86.8px;height:20px;"></div>
  <div class="btn" style="left:641.2px;top:115.5px;width:77px;height:20px;"></div>
  <div class="btn sel" style="left:727.4px;top:115.5px;width:73.3px;height:20px;"></div>
  <div class="btn sel" style="left:810.3px;top:115.5px;width:63px;height:20px;"></div>
  <svg style="left:415.5px;top:123.3px;" width="8" height="5" viewBox="0 0 8 5"><path d="M.8 .8 L4 3.8 L7.2 .8" stroke="#444" stroke-width="1" fill="none"/></svg>
  <svg style="left:518.2px;top:124.3px;" width="8" height="5" viewBox="0 0 8 5"><path d="M.8 .8 L4 3.8 L7.2 .8" stroke="#333" stroke-width="1" fill="none"/></svg>
  <svg style="left:614.4px;top:124.3px;" width="8" height="5" viewBox="0 0 8 5"><path d="M.8 .8 L4 3.8 L7.2 .8" stroke="#333" stroke-width="1" fill="none"/></svg>
  <svg style="left:701px;top:124.3px;" width="8" height="5" viewBox="0 0 8 5"><path d="M.8 .8 L4 3.8 L7.2 .8" stroke="#333" stroke-width="1" fill="none"/></svg>
  <svg style="left:783.4px;top:123.5px;" width="8" height="5" viewBox="0 0 8 5"><path d="M.8 .8 L4 3.8 L7.2 .8" stroke="#444" stroke-width="1" fill="none"/></svg>
  <svg style="left:856.2px;top:123.5px;" width="8" height="5" viewBox="0 0 8 5"><path d="M.8 .8 L4 3.8 L7.2 .8" stroke="#444" stroke-width="1" fill="none"/></svg>
  <!-- planner panel -->
  <div style="left:176px;top:151.5px;width:835.5px;height:420px;background:#fff;border:1px solid #e6e6e6;box-sizing:border-box;border-radius:2px 2px 0 0;"></div>
  <div class="hl" style="left:177px;top:181px;width:834px;height:1.5px;background:#ebebeb;"></div>
  <div class="dot" style="left:591px;top:161.8px;background:#fdecc8;"></div>
  <div class="dot" style="left:650.7px;top:161.8px;background:#fdecc8;"></div>
  <div class="dot" style="left:742.7px;top:161.8px;background:#c6efd8;"></div>
  <div class="dot" style="left:808.8px;top:161.8px;background:#d3ecfa;"></div>
  <div class="dot" style="left:880px;top:161.8px;background:#f1d2f9;"></div>
  <div class="dot" style="left:951.9px;top:161.8px;background:#d9d9d9;"></div>
  <!-- left panel -->
  <div class="vl" style="left:404.6px;top:182px;width:1.2px;height:380px;background:#e4e4e4;"></div>
  <div class="hl" style="left:177px;top:217.3px;width:228px;"></div>
  <div class="hl" style="left:177px;top:247.8px;width:228px;"></div>
  <div class="hl" style="left:177px;top:419.8px;width:228px;"></div>
  <div class="hl" style="left:177px;top:449.8px;width:228px;"></div>
  <div class="badge" style="left:236.6px;top:195.3px;width:10px;height:9.3px;"></div>
  <div class="badge" style="left:273.7px;top:228.2px;width:10.2px;height:9.4px;"></div>
  <div class="badge" style="left:287.6px;top:430.6px;width:10px;height:9.4px;"></div>
  <svg style="left:385px;top:196px;" width="11" height="8" viewBox="0 0 11 8"><path d="M1 4 H6.6 M3.4 1.6 L1 4 L3.4 6.4 M9.2 1.2 V6.8" stroke="#333" stroke-width="1" fill="none"/></svg>
  <svg style="left:389.6px;top:230.6px;" width="7" height="5" viewBox="0 0 7 5"><path d="M.8 4.2 L3.5 1.4 L6.2 4.2" stroke="#222" stroke-width="1.2" fill="none"/></svg>
  <svg style="left:389.4px;top:433.2px;" width="7" height="5" viewBox="0 0 7 5"><path d="M.8 4.2 L3.5 1.4 L6.2 4.2" stroke="#222" stroke-width="1.2" fill="none"/></svg>
  <div class="rq" style="left:182.3px;top:253.5px;width:216.8px;height:41px;"></div>
  <div class="pill" style="left:315.4px;top:268px;width:60px;height:12.2px;background:#c9f0da;"></div>
  <svg style="left:384.4px;top:270px;" width="3" height="8" viewBox="0 0 3 8"><circle cx="1.5" cy="1.1" r=".95" fill="#1a6fe0"/><circle cx="1.5" cy="4" r=".95" fill="#1a6fe0"/><circle cx="1.5" cy="6.9" r=".95" fill="#1a6fe0"/></svg>
  <div class="rq" style="left:182.3px;top:456.2px;width:212.8px;height:53.2px;"></div>
  <div class="pill" style="left:312px;top:464.3px;width:59.6px;height:11.8px;background:#c9f0da;"></div>
  <svg style="left:380.6px;top:466.2px;" width="3" height="8" viewBox="0 0 3 8"><circle cx="1.5" cy="1.1" r=".95" fill="#1a6fe0"/><circle cx="1.5" cy="4" r=".95" fill="#1a6fe0"/><circle cx="1.5" cy="6.9" r=".95" fill="#1a6fe0"/></svg>
  <svg style="left:191px;top:480.2px;" width="8" height="8" viewBox="0 0 8 8"><rect x=".6" y=".6" width="6.8" height="6.8" rx="1.2" stroke="#6a6a6a" stroke-width=".8" fill="none"/><path d="M.6 3.6 H7.4 M4.6 .6 V3.6" stroke="#6a6a6a" stroke-width=".8"/></svg>
  <svg style="left:191px;top:492.2px;" width="8" height="9" viewBox="0 0 8 9"><rect x=".6" y="1.6" width="6.8" height="6.8" rx="1.2" stroke="#6a6a6a" stroke-width=".8" fill="none"/><path d="M2.2 .4 V2 M5.8 .4 V2" stroke="#6a6a6a" stroke-width=".8"/></svg>
  <div class="rq" style="left:182.3px;top:514.8px;width:212.8px;height:53.2px;"></div>
  <div class="pill" style="left:290px;top:523px;width:81.6px;height:11.6px;background:#fdecc8;"></div>
  <svg style="left:380.6px;top:525px;" width="3" height="8" viewBox="0 0 3 8"><circle cx="1.5" cy="1.1" r=".95" fill="#1a6fe0"/><circle cx="1.5" cy="4" r=".95" fill="#1a6fe0"/><circle cx="1.5" cy="6.9" r=".95" fill="#1a6fe0"/></svg>
  <svg style="left:191px;top:538.2px;" width="8" height="9" viewBox="0 0 8 9"><rect x=".6" y="1.6" width="6.8" height="6.8" rx="1.2" stroke="#6a6a6a" stroke-width=".8" fill="none"/><path d="M2.2 .4 V2 M5.8 .4 V2" stroke="#6a6a6a" stroke-width=".8"/></svg>
  <div style="left:400.4px;top:451px;width:4.2px;height:74.5px;border-radius:2.1px;background:#c4c4c4;"></div>
  <!-- grid -->
  <div class="hl" style="left:405.5px;top:217.3px;width:595px;background:#ededed;"></div>
<div class="hl" style="left:405.5px;top:242.0px;width:595px;background:#ededed;"></div>
<div class="hl" style="left:405.5px;top:270.7px;width:595px;background:#ededed;"></div>
<div class="hl" style="left:405.5px;top:299.4px;width:595px;background:#ededed;"></div>
<div class="hl" style="left:405.5px;top:328.1px;width:595px;background:#ededed;"></div>
<div class="hl" style="left:405.5px;top:356.8px;width:595px;background:#ededed;"></div>
<div class="hl" style="left:405.5px;top:385.5px;width:595px;background:#ededed;"></div>
<div class="hl" style="left:405.5px;top:414.2px;width:595px;background:#ededed;"></div>
<div class="hl" style="left:405.5px;top:442.9px;width:595px;background:#ededed;"></div>
<div class="hl" style="left:405.5px;top:471.6px;width:595px;background:#ededed;"></div>
<div class="hl" style="left:405.5px;top:500.3px;width:595px;background:#ededed;"></div>
<div class="hl" style="left:405.5px;top:529.0px;width:595px;background:#ededed;"></div>
<div class="hl" style="left:405.5px;top:557.7px;width:595px;background:#ededed;"></div>
<div class="vl" style="left:500.8px;top:217.8px;width:1px;height:350px;background:#ededed;"></div>
<div class="vl" style="left:573.2px;top:217.8px;width:1px;height:350px;background:#ededed;"></div>
<div class="vl" style="left:645.6px;top:217.8px;width:1px;height:350px;background:#ededed;"></div>
<div class="vl" style="left:718.0px;top:217.8px;width:1px;height:350px;background:#ededed;"></div>
<div class="vl" style="left:790.4px;top:217.8px;width:1px;height:350px;background:#ededed;"></div>
<div class="vl" style="left:862.8px;top:217.8px;width:1px;height:350px;background:#ededed;"></div>
<div class="vl" style="left:935.2px;top:217.8px;width:1px;height:350px;background:#ededed;"></div>
<svg style="left:668px;top:195.8px;" width="6" height="9" viewBox="0 0 6 9"><path d="M4.8 .9 L1.3 4.5 L4.8 8.1" stroke="#1a6fe0" stroke-width="1.3" fill="none"/></svg>
<svg style="left:732px;top:195.8px;" width="6" height="9" viewBox="0 0 6 9"><path d="M1.2 .9 L4.7 4.5 L1.2 8.1" stroke="#1a6fe0" stroke-width="1.3" fill="none"/></svg>
<div class="ab" style="left:426.3px;top:252.4px;"></div>
<svg style="left:411.8px;top:254.7px;" width="9" height="6" viewBox="0 0 9 6"><path d="M1 1.1 L4.5 4.6 L8 1.1" stroke="#111" stroke-width="1.3" fill="none"/></svg>
<div class="ab" style="left:426.3px;top:281.1px;"></div>
<svg style="left:411.8px;top:283.4px;" width="9" height="6" viewBox="0 0 9 6"><path d="M1 1.1 L4.5 4.6 L8 1.1" stroke="#111" stroke-width="1.3" fill="none"/></svg>
<div class="ab" style="left:426.3px;top:309.8px;"></div>
<svg style="left:411.8px;top:312.1px;" width="9" height="6" viewBox="0 0 9 6"><path d="M1 1.1 L4.5 4.6 L8 1.1" stroke="#111" stroke-width="1.3" fill="none"/></svg>
<div class="ab" style="left:426.3px;top:338.5px;"></div>
<svg style="left:411.8px;top:340.8px;" width="9" height="6" viewBox="0 0 9 6"><path d="M1 1.1 L4.5 4.6 L8 1.1" stroke="#111" stroke-width="1.3" fill="none"/></svg>
<div class="ab" style="left:426.3px;top:367.2px;"></div>
<svg style="left:411.8px;top:369.1px;" width="9" height="6" viewBox="0 0 9 6"><path d="M1 4.9 L4.5 1.4 L8 4.9" stroke="#111" stroke-width="1.3" fill="none"/></svg>
<div class="ab" style="left:426.3px;top:482.0px;"></div>
<svg style="left:411.8px;top:484.3px;" width="9" height="6" viewBox="0 0 9 6"><path d="M1 1.1 L4.5 4.6 L8 1.1" stroke="#111" stroke-width="1.3" fill="none"/></svg>
<div class="ab" style="left:426.3px;top:510.7px;"></div>
<svg style="left:411.8px;top:513.0px;" width="9" height="6" viewBox="0 0 9 6"><path d="M1 1.1 L4.5 4.6 L8 1.1" stroke="#111" stroke-width="1.3" fill="none"/></svg>
<div class="ab" style="left:426.3px;top:539.4px;"></div>
<svg style="left:411.8px;top:541.7px;" width="9" height="6" viewBox="0 0 9 6"><path d="M1 1.1 L4.5 4.6 L8 1.1" stroke="#111" stroke-width="1.3" fill="none"/></svg>
<div class="ab" style="left:433.8px;top:395.7px;"></div>
<div class="ab" style="left:433.8px;top:424.4px;"></div>
<div class="ab" style="left:433.8px;top:453.1px;"></div>
<div class="pill" style="left:513.3px;top:415.4px;width:130.5px;height:13.6px;background:#fdecc8;border-radius:2.5px;"></div>
<div class="pill" style="left:513.3px;top:444.3px;width:483px;height:13.3px;background:#d4edfa;border-radius:2.5px;"></div>
<svg style="left:504.2px;top:419.2px;" width="5" height="7" viewBox="0 0 5 7"><path d="M4.6 .3 V6.7 L.4 3.5 Z" fill="#111"/></svg>
<svg style="left:504.2px;top:447.8px;" width="5" height="7" viewBox="0 0 5 7"><path d="M4.6 .3 V6.7 L.4 3.5 Z" fill="#111"/></svg>
<svg style="left:519px;top:418.8px;" width="7.7" height="7.7" viewBox="0 0 7 7"><circle cx="2.8" cy="3" r="2" stroke="#888" stroke-width=".7" fill="none"/><circle cx="4.3" cy="4.2" r="2" stroke="#888" stroke-width=".7" fill="none"/></svg>
<svg style="left:519.8px;top:447.9px;" width="6" height="7" viewBox="0 0 6 7"><rect x=".5" y=".6" width="5" height="5.6" rx=".9" stroke="#777" stroke-width=".8" fill="none"/><path d="M.5 3.2 H5.5" stroke="#777" stroke-width=".8"/></svg>
  <span class="t" id="t0" style="left:185.70px;top:75.60px;font-size:12.50px;font-weight:700;color:#111;transform:scaleX(0.9368);-webkit-text-stroke:0.30px #111;">Dispatch Center</span>
<span class="t" id="t1" style="left:816.40px;top:76.30px;font-size:9.60px;font-weight:400;color:#555;transform:scaleX(0.9176);-webkit-text-stroke:0.22px #555;">Project</span>
<span class="t" id="t2" style="left:857.00px;top:75.80px;font-size:9.60px;font-weight:400;color:#aaa;transform:scaleX(0.9183);">All</span>
<span class="t" id="t3" style="left:204.00px;top:118.80px;font-size:9.30px;font-weight:400;color:#b5b5b5;transform:scaleX(0.9113);">Search Requests</span>
<span class="t" id="t4" style="left:357.30px;top:118.60px;font-size:9.00px;font-weight:400;color:#111;transform:scaleX(0.9427);-webkit-text-stroke:.45px #111;">Request Type</span>
<span class="t" id="t5" style="left:454.70px;top:118.60px;font-size:9.00px;font-weight:400;color:#222;transform:scaleX(0.9554);-webkit-text-stroke:0.22px #222;">Request Status</span>
<span class="t" id="t6" style="left:556.50px;top:118.60px;font-size:9.00px;font-weight:400;color:#222;transform:scaleX(0.9461);-webkit-text-stroke:0.22px #222;">Requested By</span>
<span class="t" id="t7" style="left:652.80px;top:118.60px;font-size:9.00px;font-weight:400;color:#222;transform:scaleX(0.9327);-webkit-text-stroke:0.22px #222;">Created On</span>
<span class="t" id="t8" style="left:735.50px;top:118.60px;font-size:9.00px;font-weight:400;color:#222;transform:scaleX(0.9760);-webkit-text-stroke:0.22px #222;">Equipment</span>
<span class="t" id="t9" style="left:818.70px;top:118.60px;font-size:9.00px;font-weight:400;color:#222;transform:scaleX(0.9412);-webkit-text-stroke:0.22px #222;">Week</span>
<span class="t" id="t10" style="left:192.00px;top:159.30px;font-size:10.50px;font-weight:700;color:#111;transform:scaleX(0.9035);-webkit-text-stroke:0.30px #111;">Planner</span>
<span class="t" id="t11" style="left:605.30px;top:159.70px;font-size:7.60px;font-weight:400;color:#222;transform:scaleX(0.9508);-webkit-text-stroke:0.22px #222;">Reserved</span>
<span class="t" id="t12" style="left:664.80px;top:159.70px;font-size:7.60px;font-weight:400;color:#222;transform:scaleX(0.9818);-webkit-text-stroke:0.22px #222;">Ready for Dispatch</span>
<span class="t" id="t13" style="left:756.80px;top:159.70px;font-size:7.60px;font-weight:400;color:#222;transform:scaleX(0.9789);-webkit-text-stroke:0.22px #222;">Dispatched</span>
<span class="t" id="t14" style="left:822.80px;top:159.70px;font-size:7.60px;font-weight:400;color:#222;transform:scaleX(0.9633);-webkit-text-stroke:0.22px #222;">Checked Out</span>
<span class="t" id="t15" style="left:894.10px;top:159.70px;font-size:7.60px;font-weight:400;color:#222;transform:scaleX(0.9958);-webkit-text-stroke:0.22px #222;">Maintenance</span>
<span class="t" id="t16" style="left:966.00px;top:159.70px;font-size:7.60px;font-weight:400;color:#222;transform:scaleX(0.9319);-webkit-text-stroke:0.22px #222;">On Order</span>
<span class="t" id="t17" style="left:187.20px;top:192.80px;font-size:10.50px;font-weight:700;color:#111;transform:scaleX(0.8844);-webkit-text-stroke:0.30px #111;">Requests</span>
<span class="t" id="t18" style="left:239.60px;top:193.00px;font-size:7.50px;font-weight:700;color:#fff;transform:scaleX(1.0067);">9</span>
<span class="t" id="t19" style="left:187.20px;top:225.90px;font-size:10.50px;font-weight:700;color:#111;transform:scaleX(0.8847);-webkit-text-stroke:0.30px #111;">General Requests</span>
<span class="t" id="t20" style="left:277.00px;top:225.90px;font-size:7.50px;font-weight:700;color:#fff;transform:scaleX(0.9109);">1</span>
<span class="t" id="t21" style="left:190.00px;top:260.70px;font-size:9.00px;font-weight:700;color:#222;transform:scaleX(0.9156);-webkit-text-stroke:0.30px #222;">Subcompact Tractor needs</span>
<span class="t" id="t22" style="left:190.00px;top:273.20px;font-size:9.00px;font-weight:700;color:#222;transform:scaleX(0.9258);-webkit-text-stroke:0.30px #222;">immediate inspection</span>
<span class="t" id="t23" style="left:331.60px;top:267.10px;font-size:8.00px;font-weight:400;color:#333;transform:scaleX(0.9401);-webkit-text-stroke:0.22px #333;">Pending</span>
<span class="t" id="t24" style="left:187.00px;top:428.20px;font-size:10.50px;font-weight:700;color:#111;transform:scaleX(0.8867);-webkit-text-stroke:0.30px #111;">Equipment Requests</span>
<span class="t" id="t25" style="left:290.50px;top:428.30px;font-size:7.50px;font-weight:700;color:#fff;transform:scaleX(1.0067);">8</span>
<span class="t" id="t26" style="left:190.00px;top:462.80px;font-size:9.30px;font-weight:700;color:#222;transform:scaleX(0.8782);-webkit-text-stroke:0.30px #222;">Bulldozer</span>
<span class="t" id="t27" style="left:328.00px;top:463.20px;font-size:8.00px;font-weight:400;color:#333;transform:scaleX(0.9435);-webkit-text-stroke:0.22px #333;">Pending</span>
<span class="t" id="t28" style="left:205.50px;top:477.20px;font-size:7.80px;font-weight:400;color:#666;transform:scaleX(0.9586);-webkit-text-stroke:0.22px #666;">#1 - Construction at Albany Site</span>
<span class="t" id="t29" style="left:205.50px;top:489.50px;font-size:7.80px;font-weight:400;color:#666;transform:scaleX(0.9395);-webkit-text-stroke:0.22px #666;">24-02-2026 12:00 - 03-03-2026 00:00</span>
<span class="t" id="t30" style="left:190.00px;top:521.60px;font-size:9.30px;font-weight:700;color:#222;transform:scaleX(0.8823);-webkit-text-stroke:0.30px #222;">Circular Saw</span>
<span class="t" id="t31" style="left:300.00px;top:521.80px;font-size:8.00px;font-weight:400;color:#333;transform:scaleX(0.9254);-webkit-text-stroke:0.22px #333;">Ready To Dispatch</span>
<span class="t" id="t32" style="left:205.50px;top:535.70px;font-size:7.80px;font-weight:400;color:#666;transform:scaleX(0.9395);-webkit-text-stroke:0.22px #666;">23-02-2026 16:01 - 02-03-2026 00:00</span>
<span class="t" id="t33" style="left:683.00px;top:193.00px;font-size:8.40px;font-weight:700;color:#111;transform:scaleX(0.8811);-webkit-text-stroke:0.30px #111;">March 2026</span>
<span class="t" id="t34" style="left:444.30px;top:223.60px;font-size:8.00px;font-weight:400;color:#222;transform:scaleX(0.9661);-webkit-text-stroke:.3px #222;">Items</span>
<span class="t" id="t35" style="left:525.00px;top:217.60px;font-size:8.00px;font-weight:400;color:#222;transform:scaleX(0.9211);-webkit-text-stroke:.3px #222;">Sunday</span>
<span class="t" id="t36" style="left:533.40px;top:229.40px;font-size:8.00px;font-weight:400;color:#222;transform:scaleX(0.9207);-webkit-text-stroke:.3px #222;">01</span>
<span class="t" id="t37" style="left:596.30px;top:217.60px;font-size:8.00px;font-weight:400;color:#222;transform:scaleX(0.9554);-webkit-text-stroke:.3px #222;">Monday</span>
<span class="t" id="t38" style="left:605.80px;top:229.40px;font-size:8.00px;font-weight:400;color:#222;transform:scaleX(0.9207);-webkit-text-stroke:.3px #222;">02</span>
<span class="t" id="t39" style="left:668.00px;top:217.60px;font-size:8.00px;font-weight:400;color:#222;transform:scaleX(0.9411);-webkit-text-stroke:.3px #222;">Tuesday</span>
<span class="t" id="t40" style="left:678.20px;top:229.40px;font-size:8.00px;font-weight:400;color:#222;transform:scaleX(0.9207);-webkit-text-stroke:.3px #222;">03</span>
<span class="t" id="t41" style="left:735.30px;top:217.60px;font-size:8.00px;font-weight:400;color:#222;transform:scaleX(0.9214);-webkit-text-stroke:.3px #222;">Wednesday</span>
<span class="t" id="t42" style="left:750.60px;top:229.40px;font-size:8.00px;font-weight:400;color:#222;transform:scaleX(0.9207);-webkit-text-stroke:.3px #222;">04</span>
<span class="t" id="t43" style="left:811.30px;top:217.60px;font-size:8.00px;font-weight:400;color:#222;transform:scaleX(0.9473);-webkit-text-stroke:.3px #222;">Thursday</span>
<span class="t" id="t44" style="left:823.00px;top:229.40px;font-size:8.00px;font-weight:400;color:#222;transform:scaleX(0.9207);-webkit-text-stroke:.3px #222;">05</span>
<span class="t" id="t45" style="left:889.40px;top:217.60px;font-size:8.00px;font-weight:400;color:#222;transform:scaleX(0.9085);-webkit-text-stroke:.3px #222;">Friday</span>
<span class="t" id="t46" style="left:895.40px;top:229.40px;font-size:8.00px;font-weight:400;color:#222;transform:scaleX(0.9207);-webkit-text-stroke:.3px #222;">06</span>
<span class="t" id="t47" style="left:956.90px;top:217.60px;font-size:8.00px;font-weight:400;color:#222;transform:scaleX(0.9366);-webkit-text-stroke:.3px #222;">Saturday</span>
<span class="t" id="t48" style="left:967.80px;top:229.40px;font-size:8.00px;font-weight:400;color:#222;transform:scaleX(0.9207);-webkit-text-stroke:.3px #222;">07</span>
<span class="t" id="t49" style="left:446.30px;top:250.30px;font-size:9.30px;font-weight:400;color:#222;transform:scaleX(0.9261);-webkit-text-stroke:0.22px #222;">Bulldozer</span>
<span class="t" id="t50" style="left:431.40px;top:250.20px;font-size:6.60px;font-weight:400;color:#223;transform:scaleX(0.9986);-webkit-text-stroke:0.22px #223;">A</span>
<span class="t" id="t51" style="left:446.30px;top:279.00px;font-size:9.30px;font-weight:400;color:#222;transform:scaleX(0.9290);-webkit-text-stroke:0.22px #222;">Canon Printer</span>
<span class="t" id="t52" style="left:431.40px;top:278.90px;font-size:6.60px;font-weight:400;color:#223;transform:scaleX(0.9986);-webkit-text-stroke:0.22px #223;">A</span>
<span class="t" id="t53" style="left:446.30px;top:307.70px;font-size:9.30px;font-weight:400;color:#222;transform:scaleX(0.9406);-webkit-text-stroke:0.22px #222;">Dell Projector</span>
<span class="t" id="t54" style="left:431.40px;top:307.60px;font-size:6.60px;font-weight:400;color:#223;transform:scaleX(0.9986);-webkit-text-stroke:0.22px #223;">A</span>
<span class="t" id="t55" style="left:446.30px;top:336.40px;font-size:9.30px;font-weight:400;color:#222;transform:scaleX(0.9283);-webkit-text-stroke:0.22px #222;">Digging Machi</span>
<span class="t" id="t56" style="left:431.40px;top:336.30px;font-size:6.60px;font-weight:400;color:#223;transform:scaleX(0.9986);-webkit-text-stroke:0.22px #223;">A</span>
<span class="t" id="t57" style="left:446.30px;top:365.10px;font-size:9.30px;font-weight:400;color:#222;transform:scaleX(0.9357);-webkit-text-stroke:0.22px #222;">Dump Truck</span>
<span class="t" id="t58" style="left:431.40px;top:365.00px;font-size:6.60px;font-weight:400;color:#223;transform:scaleX(0.9986);-webkit-text-stroke:0.22px #223;">A</span>
<span class="t" id="t59" style="left:446.30px;top:479.90px;font-size:9.30px;font-weight:400;color:#222;transform:scaleX(0.9186);-webkit-text-stroke:0.22px #222;">HP Scanner</span>
<span class="t" id="t60" style="left:431.40px;top:479.80px;font-size:6.60px;font-weight:400;color:#223;transform:scaleX(0.9986);-webkit-text-stroke:0.22px #223;">A</span>
<span class="t" id="t61" style="left:446.30px;top:508.60px;font-size:9.30px;font-weight:400;color:#222;transform:scaleX(0.9474);-webkit-text-stroke:0.22px #222;">Macbook Pro</span>
<span class="t" id="t62" style="left:431.40px;top:508.50px;font-size:6.60px;font-weight:400;color:#223;transform:scaleX(0.9986);-webkit-text-stroke:0.22px #223;">A</span>
<span class="t" id="t63" style="left:446.30px;top:537.30px;font-size:9.30px;font-weight:400;color:#222;transform:scaleX(0.9313);-webkit-text-stroke:0.22px #222;">Mobile Crane</span>
<span class="t" id="t64" style="left:431.40px;top:537.20px;font-size:6.60px;font-weight:400;color:#223;transform:scaleX(0.9986);-webkit-text-stroke:0.22px #223;">A</span>
<span class="t" id="t65" style="left:453.80px;top:393.60px;font-size:9.20px;font-weight:400;color:#2b6cb8;transform:scaleX(0.9196);-webkit-text-stroke:.45px #2b6cb8;">#8 - Dump T</span>
<span class="t" id="t66" style="left:438.90px;top:393.50px;font-size:6.60px;font-weight:400;color:#223;transform:scaleX(0.9986);-webkit-text-stroke:0.22px #223;">A</span>
<span class="t" id="t67" style="left:453.80px;top:422.30px;font-size:9.20px;font-weight:400;color:#2b6cb8;transform:scaleX(0.9196);-webkit-text-stroke:.45px #2b6cb8;">#9 - Dump T</span>
<span class="t" id="t68" style="left:438.90px;top:422.20px;font-size:6.60px;font-weight:400;color:#223;transform:scaleX(0.9986);-webkit-text-stroke:0.22px #223;">A</span>
<span class="t" id="t69" style="left:453.80px;top:451.00px;font-size:9.20px;font-weight:400;color:#2b6cb8;transform:scaleX(0.9393);-webkit-text-stroke:.45px #2b6cb8;">#10 - Dump</span>
<span class="t" id="t70" style="left:438.90px;top:450.90px;font-size:6.60px;font-weight:400;color:#223;transform:scaleX(0.9986);-webkit-text-stroke:0.22px #223;">A</span>
<span class="t" id="t71" style="left:531.80px;top:415.00px;font-size:9.00px;font-weight:700;color:#111;transform:scaleX(0.8981);-webkit-text-stroke:0.30px #111;">Reserved</span>
<span class="t" id="t72" style="left:531.80px;top:444.00px;font-size:9.00px;font-weight:700;color:#111;transform:scaleX(0.9070);-webkit-text-stroke:0.30px #111;">Checkout</span>
</div></div>
<div id="lg"><span style="left:36.13px;top:49.44px;transform:scale(1.0642,0.9375);">e</span><span style="left:62.12px;top:49.01px;transform:scale(1.0542,0.9457);">z</span><span style="left:83.02px;top:49.69px;transform:scale(1.1689,0.9383);">o</span></div>
<div class="abs" style="left:85px;top:69.3px;width:5px;height:1.7px;background:#333;"></div>
<div class="abs" style="left:105px;top:69.3px;width:5px;height:1.7px;background:#333;"></div>

</body></html>
